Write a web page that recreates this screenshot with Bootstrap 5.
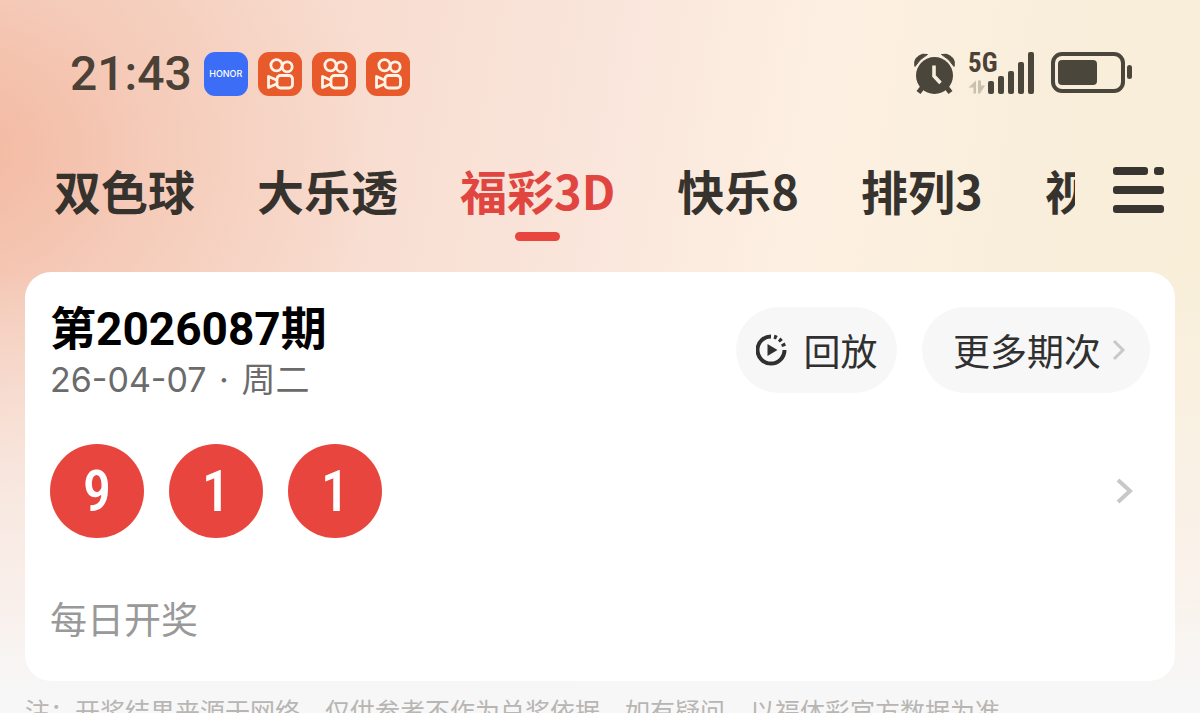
<!DOCTYPE html>
<html lang="zh-CN">
<head>
<meta charset="utf-8">
<meta name="viewport" content="width=device-width, initial-scale=1">
<title>福彩3D 开奖</title>
<link href="https://cdn.jsdelivr.net/npm/bootstrap@5.3.0/dist/css/bootstrap.min.css" rel="stylesheet">
<style>
  body { font-family: "Noto Sans CJK SC", sans-serif; background: #f7f7f7; }
  .app-shell {
    background:
      linear-gradient(180deg, rgba(247,247,247,0) 270px, rgba(250,243,240,.85) 600px, #f7f7f7 690px),
      radial-gradient(ellipse 420px 360px at -40px 150px, #f3b8a0 0, rgba(244,190,168,.55) 45%, rgba(246,205,188,0) 100%),
      linear-gradient(100deg, #f5d8ca 0, #f8ddd0 28%, #fae6dc 48%, #fdf0e2 64%, #f9eedb 80%, #f8efd8 100%);
  }
  .status-bar { padding: 52px 67px 0 70px; color: #4b4136; }
  .clock { font-family: Roboto, "Noto Sans CJK SC", sans-serif; font-size: 48px; line-height: 44px; font-weight: 500; margin-right: 12px; }
  .app-icons { gap: 10px; }
  .app-icon { width: 44px; height: 44px; border-radius: 11px; background: #e8592b; }
  .app-icon.honor { background: #3b6df6; color: #fff; font: 500 9px/44px Inter, sans-serif; }
  .net-label { font: 700 27px/22px "Liberation Sans Narrow", "Roboto Condensed", sans-serif; top: 0; left: 0; }
  .signal { width: 68px; height: 44px; margin: 0 14px 0 12px; }
  .lottery-nav { padding: 60px 36px 0 54px; height: 176px; gap: 38px; }
  .tab-strip { gap: 62px; }
  .tab-link { font-size: 47px; line-height: 68px; font-weight: 700; color: #36322d; text-decoration: none; }
  .tab-link.active { color: #e0463f; }
  .tab-link.active::after { content: ""; display: block; width: 45px; height: 9px; border-radius: 5px; background: #e8453e; margin: 8px auto 0; }
  .menu-btn { margin-top: 11px; }
  .draw-card { margin: 0 25px; padding: 35px 25px 38px; border-radius: 26px; border: 0; }
  .issue { font-family: Roboto, "Noto Sans CJK SC", sans-serif; font-size: 46px; line-height: 44px; font-weight: 700; color: #000; }
  .draw-date { font-family: Inter, "Noto Sans CJK SC", sans-serif; font-size: 34px; line-height: 40px; color: #6b6b6b; margin-top: 9px; }
  .dot-sep { margin: 0 3px; }
  .pill { height: 86px; border-radius: 43px; background: #f7f7f7; font-size: 37px; color: #303030; line-height: 50px; }
  .pill:hover { background: #f0f0f0; }
  .pill-row { gap: 25px; }
  .replay { width: 161px; }
  .more { width: 228px; }
  .ball { width: 94px; height: 94px; background: #e8453e; color: #fff; font: 500 57px/96px "Roboto Condensed", Roboto, sans-serif; }
  .balls { gap: 25px; }
  .draw-row { margin-top: 44px; padding-right: 16px; }
  .schedule { font-size: 37px; line-height: 50px; color: #999; margin-top: 55px; }
  .footnote { font-size: 25px; line-height: 36px; color: #b8b5b3; padding: 11px 25px 0; }
</style>
</head>
<body>
<svg class="d-none" xmlns="http://www.w3.org/2000/svg">
  <symbol id="camera" viewBox="0 0 44 44">
    <g fill="none" stroke="#fff3e6" stroke-width="2.8" stroke-linejoin="round">
      <circle cx="18.5" cy="13.2" r="5.600"/><circle cx="29.200" cy="14.800" r="5"/>
      <rect x="19" y="23.500" width="15.500" height="12.500" rx="3.500"/>
      <path d="M18.500 28 10.500 24.500v11l8-3.500"/>
    </g>
  </symbol>
</svg>
<div class="app-shell vh-100 overflow-hidden">
  <header class="status-bar d-flex justify-content-between">
    <div class="d-flex">
      <span class="clock">21:43</span>
      <div class="app-icons d-flex">
        <span class="app-icon honor text-center">HONOR</span>
        <svg class="app-icon"><use href="#camera"/></svg>
        <svg class="app-icon"><use href="#camera"/></svg>
        <svg class="app-icon"><use href="#camera"/></svg>
      </div>
    </div>
    <div class="d-flex">
      <svg width="42" height="44" viewBox="0 0 42 44" fill="#4b463c" aria-label="闹钟">
        <circle cx="20.500" cy="23.500" r="18.500"/>
        <path d="M1 14.500Q-.5 8 4 4.500T13.500 2.500Q6 6.500 1 14.500ZM40 14.500Q41.500 8 37 4.500T27.500 2.500Q35 6.500 40 14.500Z" stroke="#4b463c"/>
        <path d="M8 36 4.500 40.500M33 36l3.500 4.500" stroke="#4b463c" stroke-width="5"/>
        <path d="M20 13.500v10.500l6.500 7" fill="none" stroke="#f9eedb" stroke-width="3.600"/>
      </svg>
      <div class="signal position-relative">
        <span class="net-label position-absolute">5G</span>
        <svg class="d-block" width="68" height="44" viewBox="0 0 68 44" fill="#4b463c" aria-label="信号">
          <g><rect x="20" y="29" width="6" height="13" rx="2"/><rect x="30" y="24" width="6" height="18" rx="2"/><rect x="40" y="19" width="6" height="23" rx="2"/><rect x="50" y="10" width="6" height="32" rx="2"/><rect x="60" y="0" width="6" height="42" rx="2"/></g>
          <path d="M8 28.500v13H5.500v-6H.500ZM10 28.500h3V33.500h4l-5 8h-2Z" fill="#c9c0ae"/>
        </svg>
      </div>
      <svg width="83" height="44" viewBox="0 0 83 44" fill="#4b463c" aria-label="电池">
        <rect x="3" y="2" width="70" height="37" rx="9" fill="none" stroke="#4b463c" stroke-width="4"/>
        <rect x="8" y="8" width="39" height="25" rx="4"/><rect x="77" y="13" width="5" height="14" rx="2.500"/>
      </svg>
    </div>
  </header>

  <nav class="lottery-nav d-flex align-items-start">
    <div class="tab-strip d-flex flex-grow-1 overflow-hidden text-nowrap">
      <a class="tab-link" href="#">双色球</a>
      <a class="tab-link" href="#">大乐透</a>
      <a class="tab-link active" href="#" aria-current="page">福彩3D</a>
      <a class="tab-link" href="#">快乐8</a>
      <a class="tab-link" href="#">排列3</a>
      <a class="tab-link" href="#">视频</a>
    </div>
    <button class="menu-btn btn p-0 border-0 d-flex" type="button" aria-label="菜单">
      <svg width="51" height="46" fill="#383530"><rect width="35" height="8" rx="3"/><rect x="41" width="10" height="8" rx="3"/><rect y="19" width="51" height="8" rx="3"/><rect y="38" width="51" height="8" rx="3"/></svg>
    </button>
  </nav>

  <main class="card draw-card">
    <div class="d-flex justify-content-between align-items-start">
      <div>
        <h1 class="issue m-0">第2026087期</h1>
        <div class="draw-date">26-04-07 <span class="dot-sep">·</span> 周二</div>
      </div>
      <div class="pill-row d-flex">
        <button class="pill replay btn border-0 p-0 d-flex align-items-center justify-content-center gap-3" type="button">
          <svg width="32" height="32" viewBox="0 0 32 32"><g fill="none" stroke="#303030" stroke-width="4"><path d="M15 2.500A13.500 13.500 0 1 0 28.500 16"/><path d="M18 2.800A13.500 13.500 0 0 1 28.300 14" stroke-dasharray="3 2.700"/></g><path d="M11.500 10v12l10-6Z" fill="#303030"/></svg>
          回放
        </button>
        <button class="pill more btn border-0 p-0 ps-2 d-flex align-items-center justify-content-center gap-2" type="button">
          更多期次
          <svg width="18" height="22" viewBox="0 0 18 22"><path d="m5 2 9 9-9 9" fill="none" stroke="#c9c9c9" stroke-width="3"/></svg>
        </button>
      </div>
    </div>
    <a class="draw-row d-flex justify-content-between align-items-center text-decoration-none" href="#" aria-label="开奖详情">
      <span class="balls d-flex text-center">
        <span class="ball rounded-circle">9</span>
        <span class="ball rounded-circle">1</span>
        <span class="ball rounded-circle">1</span>
      </span>
      <svg width="18" height="28" viewBox="0 0 18 28"><path d="m2 3 12 11L2 25" fill="none" stroke="#c8c8c8" stroke-width="4"/></svg>
    </a>
    <div class="schedule">每日开奖</div>
  </main>
  <footer class="footnote text-nowrap">注：开奖结果来源于网络，仅供参考不作为兑奖依据，如有疑问，以福体彩官方数据为准。</footer>
</div>
<script src="https://cdn.jsdelivr.net/npm/bootstrap@5.3.0/dist/js/bootstrap.bundle.min.js"></script>
</body>
</html>
